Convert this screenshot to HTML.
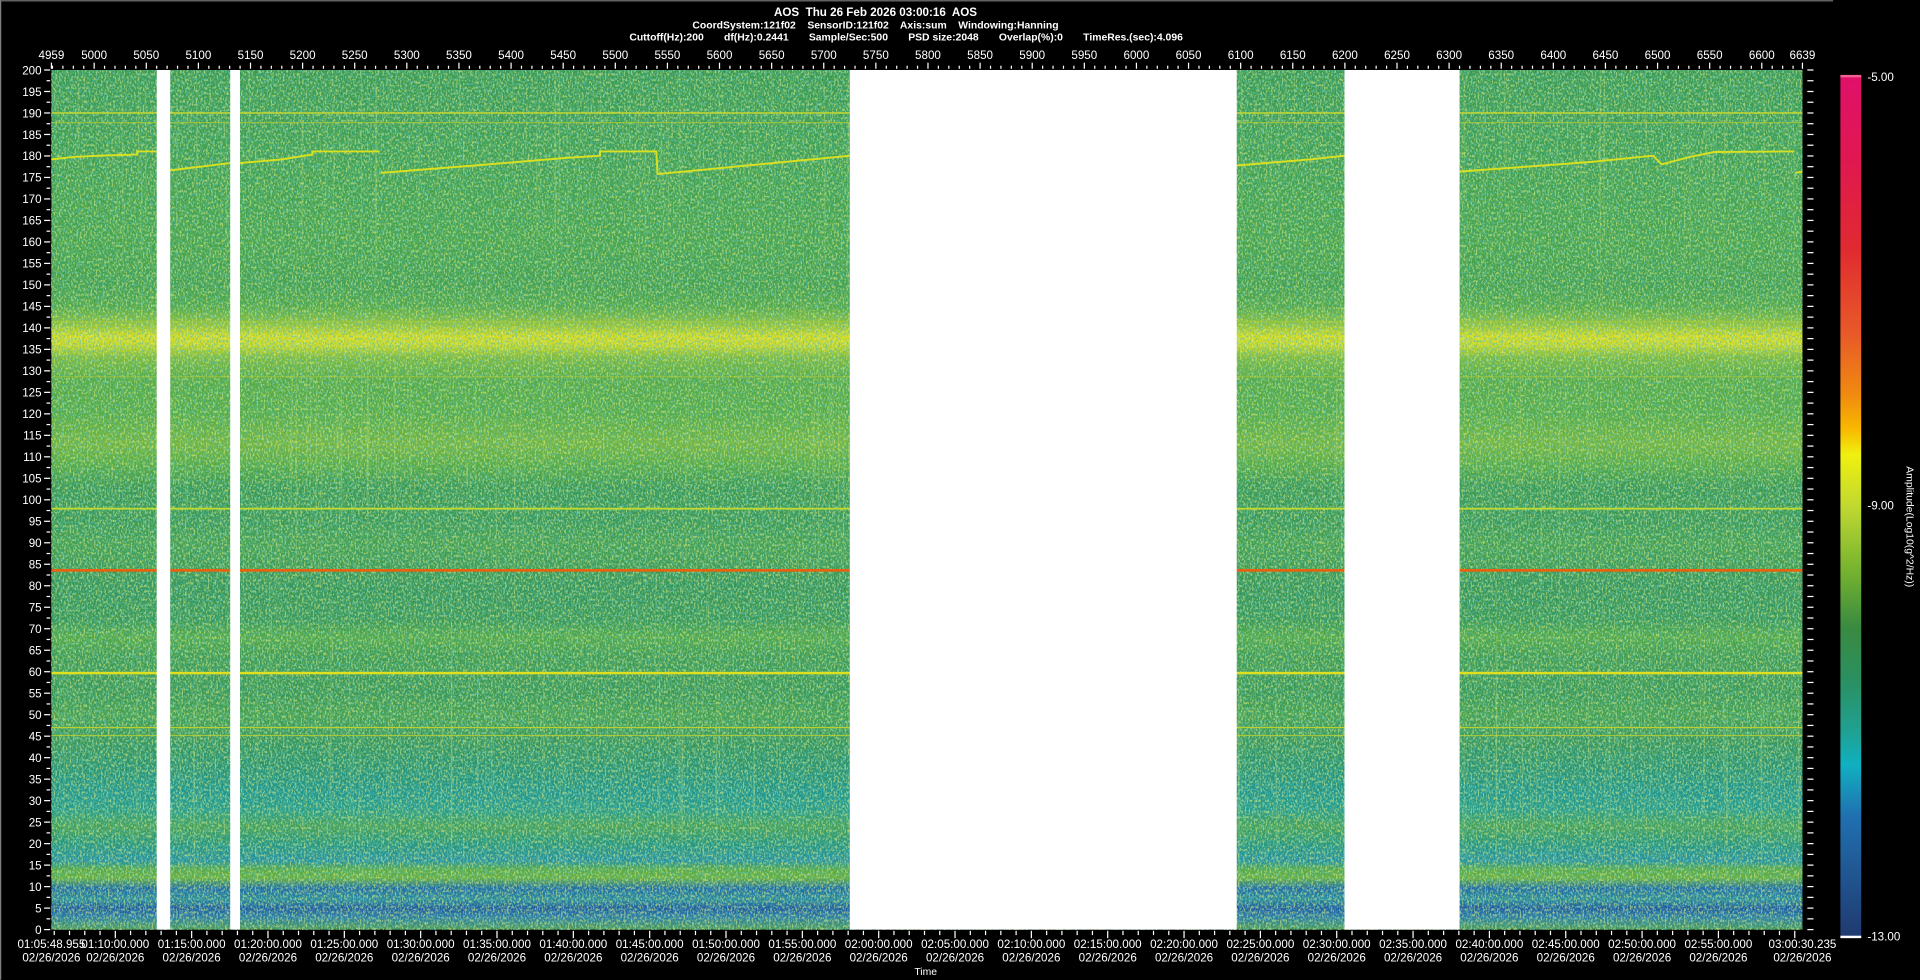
<!DOCTYPE html>
<html><head><meta charset="utf-8"><style>
html,body{margin:0;padding:0;background:#000;width:1920px;height:980px;overflow:hidden}
svg{display:block}
text{font-family:"Liberation Sans",Arial,sans-serif;fill:#fff}
</style></head><body>
<svg id="s" width="1920" height="980" viewBox="0 0 1568 800" xmlns="http://www.w3.org/2000/svg">
<defs>
<linearGradient id="spec" x1="0" y1="57" x2="0" y2="759" gradientUnits="userSpaceOnUse">
<stop offset="0" stop-color="#3a9a55"/>
<stop offset="0.1" stop-color="#40a052"/>
<stop offset="0.2" stop-color="#48a44c"/>
<stop offset="0.25" stop-color="#44a04f"/>
<stop offset="0.275" stop-color="#52a848"/>
<stop offset="0.295" stop-color="#8cc03a"/>
<stop offset="0.31" stop-color="#d6dc20"/>
<stop offset="0.32" stop-color="#c8d828"/>
<stop offset="0.335" stop-color="#7cba3c"/>
<stop offset="0.36" stop-color="#55aa46"/>
<stop offset="0.4" stop-color="#55ab46"/>
<stop offset="0.435" stop-color="#72b43e"/>
<stop offset="0.46" stop-color="#55aa45"/>
<stop offset="0.485" stop-color="#3a9955"/>
<stop offset="0.525" stop-color="#3a9958"/>
<stop offset="0.55" stop-color="#45a052"/>
<stop offset="0.575" stop-color="#409c55"/>
<stop offset="0.6" stop-color="#36965a"/>
<stop offset="0.64" stop-color="#389858"/>
<stop offset="0.66" stop-color="#52a848"/>
<stop offset="0.68" stop-color="#409c52"/>
<stop offset="0.725" stop-color="#3a9856"/>
<stop offset="0.75" stop-color="#45a050"/>
<stop offset="0.78" stop-color="#36965c"/>
<stop offset="0.81" stop-color="#2a9470"/>
<stop offset="0.84" stop-color="#20968c"/>
<stop offset="0.86" stop-color="#269c8a"/>
<stop offset="0.88" stop-color="#45a058"/>
<stop offset="0.9" stop-color="#26967e"/>
<stop offset="0.92" stop-color="#2692a0"/>
<stop offset="0.93" stop-color="#55a848"/>
<stop offset="0.94" stop-color="#66ae40"/>
<stop offset="0.952" stop-color="#1e6aa8"/>
<stop offset="0.965" stop-color="#2a8a9c"/>
<stop offset="0.975" stop-color="#1e5aa0"/>
<stop offset="0.985" stop-color="#2a7aa8"/>
<stop offset="1" stop-color="#4a9a58"/>
</linearGradient>
<linearGradient id="cbar" x1="0" y1="0" x2="0" y2="1">
<stop offset="0" stop-color="#e0106a"/>
<stop offset="0.1" stop-color="#e01850"/>
<stop offset="0.2" stop-color="#e02a30"/>
<stop offset="0.3" stop-color="#e85a28"/>
<stop offset="0.37" stop-color="#f08a10"/>
<stop offset="0.41" stop-color="#f8b800"/>
<stop offset="0.44" stop-color="#f0f010"/>
<stop offset="0.5" stop-color="#c0d830"/>
<stop offset="0.58" stop-color="#70b030"/>
<stop offset="0.64" stop-color="#3a8a40"/>
<stop offset="0.7" stop-color="#2a9060"/>
<stop offset="0.76" stop-color="#20a090"/>
<stop offset="0.8" stop-color="#10b0c0"/>
<stop offset="0.86" stop-color="#2070b0"/>
<stop offset="1" stop-color="#203a70"/>
</linearGradient>
<filter id="nyel" x="0" y="0" width="100%" height="100%">
<feTurbulence type="fractalNoise" baseFrequency="0.7 0.45" numOctaves="2" seed="3"/>
<feColorMatrix values="0 0 0 0 0.75  0 0 0 0 0.86  0 0 0 0 0.22  6 0 0 0 -3.0"/>
</filter>
<filter id="ndark" x="0" y="0" width="100%" height="100%">
<feTurbulence type="fractalNoise" baseFrequency="0.75 0.5" numOctaves="2" seed="11"/>
<feColorMatrix values="0 0 0 0 0.1  0 0 0 0 0.5  0 0 0 0 0.45  6 0 0 0 -3.0"/>
</filter>
<filter id="nvert" x="0" y="0" width="100%" height="100%">
<feTurbulence type="fractalNoise" baseFrequency="0.6 0.004" numOctaves="1" seed="7"/>
<feColorMatrix values="0 0 0 0 0.75  0 0 0 0 0.88  0 0 0 0 0.2  4 0 0 0 -2.5"/>
</filter>
</defs>
<rect x="0" y="0" width="1568" height="800" fill="#000"/>
<line x1="0" y1="0.5" x2="1497" y2="0.5" stroke="#808080"/>
<line x1="0.5" y1="0" x2="0.5" y2="800" stroke="#808080"/>
<text x="715" y="13" font-size="9.5" font-weight="bold" text-anchor="middle" xml:space="preserve">AOS  Thu 26 Feb 2026 03:00:16  AOS</text>
<text x="715" y="23" font-size="8.5" font-weight="bold" text-anchor="middle" xml:space="preserve">CoordSystem:121f02    SensorID:121f02    Axis:sum    Windowing:Hanning</text>
<text x="740" y="33" font-size="8.5" font-weight="bold" text-anchor="middle" xml:space="preserve">Cuttoff(Hz):200       df(Hz):0.2441       Sample/Sec:500       PSD size:2048       Overlap(%):0       TimeRes.(sec):4.096</text>
<rect x="42" y="57" width="1430" height="702" fill="url(#spec)"/>
<rect x="42" y="57" width="1430" height="702" filter="url(#nvert)" opacity="0.5"/>
<rect x="42" y="57" width="1430" height="702" filter="url(#nyel)" opacity="0.6"/>
<rect x="42" y="57" width="1430" height="702" filter="url(#ndark)" opacity="0.6"/>
<g id="lines">
<rect x="42" y="91.5" width="1430" height="1.2" fill="#c8d830"/>
<rect x="42" y="99.5" width="1430" height="1" fill="#a8c838" opacity="0.8"/>
<rect x="42" y="262" width="1430" height="1" fill="#a8c838" opacity="0.7"/>
<rect x="42" y="307" width="1430" height="1" fill="#a8c838" opacity="0.6"/>
<rect x="42" y="414.5" width="1430" height="1.5" fill="#c0d830"/>
<rect x="42" y="464.5" width="1430" height="2.2" fill="#e86010"/>
<rect x="42" y="548.5" width="1430" height="2" fill="#e0e020"/>
<rect x="42" y="593.5" width="1430" height="1" fill="#b8d030"/>
<rect x="42" y="600" width="1430" height="1" fill="#b8d030" opacity="0.8"/>
</g>
<g fill="none" stroke="#d8e020" stroke-width="1.6">
<polyline points="42,130 60,128 80,127 112,126 112,123.5 128,123.5"/>
<polyline points="139,139 188,133"/>
<polyline points="196,133 230,130 255,126 255,123.5 310,123.5"/>
<polyline points="311,141 400,134 460,129 490,127 490,123.5 536,123.5 537,142 694,127"/>
<polyline points="1010,135 1070,130 1098,127"/>
<polyline points="1192,140 1300,132 1350,127 1357,134 1380,128 1400,124 1465,123.5"/>
<polyline points="1466,141 1472,140"/>
</g>
<g fill="#fff">
<rect x="128" y="57" width="11" height="702"/>
<rect x="188" y="57" width="8" height="702"/>
<rect x="694" y="57" width="316" height="702"/>
<rect x="1098" y="57" width="94" height="702"/>
</g>
<rect x="1503" y="62" width="17" height="703" fill="url(#cbar)"/>
<rect x="1503" y="61" width="17" height="2" fill="#f06090"/>
<rect x="1503" y="764" width="17" height="2" fill="#fff"/>
<text x="1525" y="66" font-size="9.5">-5.00</text>
<text x="1525" y="416" font-size="9.5">-9.00</text>
<text x="1525" y="768" font-size="9.5">-13.00</text>
<text transform="translate(1557,430) rotate(90)" font-size="8.5" text-anchor="middle">Amplitude(Log10(g^2/Hz))</text>
<text x="756" y="796" font-size="8.5" text-anchor="middle">Time</text>
<g id="axes"></g>
</svg>
<script>
(function(){
var ns="http://www.w3.org/2000/svg",g=document.getElementById("axes");
function el(t,a,txt){var e=document.createElementNS(ns,t);for(var k in a)e.setAttribute(k,a[k]);if(txt!=null)e.textContent=txt;g.appendChild(e);return e;}
var L=42,R=1472,T=57,B=759;
for(var i=0;i<=80;i++){var hz=i*2.5,y=B-(hz/200)*(B-T);var major=(i%2==0);
 el("line",{x1:major?36:38,y1:y,x2:41,y2:y,stroke:"#fff","stroke-width":1});
 el("line",{x1:1476,y1:y,x2:1481,y2:y,stroke:"#fff","stroke-width":1});
 if(major)el("text",{x:34,y:y+3.5,"font-size":9.5,"text-anchor":"end"},String(hz));}
function xu(u){return L+(u-4959)/(6639-4959)*(R-L);}
for(var u=4960;u<=6630;u+=10){var x=xu(u);var maj=(u%50==0);el("line",{x1:x,y1:maj?51:53.5,x2:x,y2:56,stroke:"#fff","stroke-width":1});}
el("line",{x1:L,y1:51,x2:L,y2:56,stroke:"#fff"});el("line",{x1:R,y1:51,x2:R,y2:56,stroke:"#fff"});
el("text",{x:L,y:48,"font-size":9.5,"text-anchor":"middle"},"4959");
for(var u=5000;u<=6600;u+=50)el("text",{x:xu(u),y:48,"font-size":9.5,"text-anchor":"middle"},String(u));
el("text",{x:R,y:48,"font-size":9.5,"text-anchor":"middle"},"6639");
var t0=1*3600+5*60+48.955,t1=3*3600+30.235;
function xt(t){return L+(t-t0)/(t1-t0)*(R-L);}
for(var t=Math.ceil(t0/60)*60;t<=t1;t+=60){var x=xt(t);var maj=(t%300==0);el("line",{x1:x,y1:760,x2:x,y2:maj?766:763.5,stroke:"#fff"});}
function lab(x,s){el("text",{x:x,y:774,"font-size":9.5,"text-anchor":"middle"},s);el("text",{x:x,y:785,"font-size":9.5,"text-anchor":"middle"},"02/26/2026");}
lab(L,"01:05:48.955");
function p(n){return (n<10?"0":"")+n;}
for(var t=1*3600+10*60;t<3*3600;t+=300){var h=Math.floor(t/3600),m=Math.floor(t%3600/60);lab(xt(t),p(h)+":"+p(m)+":00.000");}
lab(R,"03:00:30.235");
})();
</script>
</body></html>
